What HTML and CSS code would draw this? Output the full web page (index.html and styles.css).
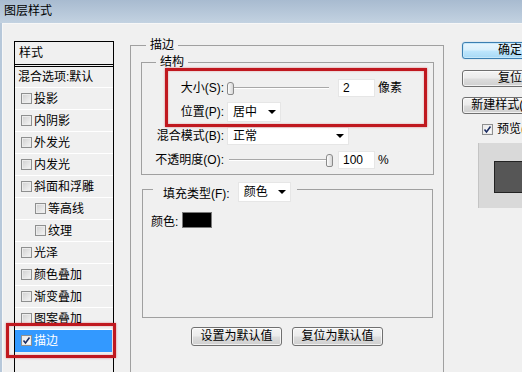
FILE: index.html
```html
<!DOCTYPE html>
<html lang="zh-CN">
<head>
<meta charset="utf-8">
<title>图层样式</title>
<link rel="stylesheet" href="styles.css">
</head>
<body>
<div class="titlebar">图层样式</div>
<div class="client">
  <div class="styles-list">
    <div class="list-header">样式</div>
    <div class="list-row blend">混合选项:默认</div>
    <div class="list-row"><span class="cb"></span>投影</div>
    <div class="list-row"><span class="cb"></span>内阴影</div>
    <div class="list-row"><span class="cb"></span>外发光</div>
    <div class="list-row"><span class="cb"></span>内发光</div>
    <div class="list-row"><span class="cb"></span>斜面和浮雕</div>
    <div class="list-row sub"><span class="cb"></span>等高线</div>
    <div class="list-row sub"><span class="cb"></span>纹理</div>
    <div class="list-row"><span class="cb"></span>光泽</div>
    <div class="list-row"><span class="cb"></span>颜色叠加</div>
    <div class="list-row"><span class="cb"></span>渐变叠加</div>
    <div class="list-row"><span class="cb"></span>图案叠加</div>
    <div class="list-row selected"><span class="cb checked"><svg viewBox="0 0 9 9" width="9" height="9"><path d="M1.5 4.5 L3.5 7 L7.5 1.5" fill="none" stroke="#1b2d63" stroke-width="1.6"/></svg></span>描边</div>
  </div>

  <fieldset class="group stroke">
    <legend>描边</legend>
    <fieldset class="group structure">
      <legend>结构</legend>
      <div class="row">
        <span class="lbl">大小(S):</span>
        <div class="slider"><span class="thumb"></span></div>
        <div class="num">2</div>
        <span class="unit">像素</span>
      </div>
      <div class="row">
        <span class="lbl">位置(P):</span>
        <div class="select pos"><span>居中</span><span class="arrow"></span></div>
      </div>
      <div class="row">
        <span class="lbl">混合模式(B):</span>
        <div class="select mode"><span>正常</span><span class="arrow"></span></div>
      </div>
      <div class="row">
        <span class="lbl">不透明度(O):</span>
        <div class="slider end"><span class="thumb"></span></div>
        <div class="num">100</div>
        <span class="unit">%</span>
      </div>
    </fieldset>
    <fieldset class="group fill">
      <legend><span class="legend-text">填充类型(F):</span><span class="select filltype"><span>颜色</span><span class="arrow"></span></span></legend>
      <div class="color-row"><span>颜色:</span><span class="swatch"></span></div>
    </fieldset>
    <div class="defaults">
      <button class="btn wide">设置为默认值</button>
      <button class="btn wide">复位为默认值</button>
    </div>
  </fieldset>

  <div class="side">
    <button class="btn side-btn default">确定</button>
    <button class="btn side-btn gap1">复位</button>
    <button class="btn side-btn gap2">新建样式(W)...</button>
    <div class="preview-check"><span class="cb checked"><svg viewBox="0 0 9 9" width="9" height="9"><path d="M1.5 4.5 L3.5 7 L7.5 1.5" fill="none" stroke="#1b2d63" stroke-width="1.6"/></svg></span>预览(V)</div>
    <div class="preview-box"><div class="preview-swatch"></div></div>
  </div>
</div>
<div class="mark mark-size"></div>
<div class="mark mark-stroke"></div>
</body>
</html>
```

FILE: styles.css
```css
html, body {
  margin: 0;
  padding: 0;
}

body {
  width: 522px;
  height: 372px;
  overflow: hidden;
  position: relative;
  background: #b7c8da;
  font-family: "Liberation Sans", "Noto Sans CJK SC", sans-serif;
  font-size: 12px;
  line-height: 14px;
  color: #000;
}

.titlebar {
  height: 23px;
  line-height: 23px;
  padding-left: 4px;
  background: linear-gradient(#a8bbd0, #c3d2e1);
  font-size: 12px;
}

.client {
  margin-left: 2px;
  border-left: 1px solid #f7f7f7;
  border-top: 1px solid #f7f7f7;
  background: #f0f0f0;
  height: 348px;
  display: flex;
  align-items: flex-start;
  overflow: hidden;
}

/* ---------- styles list ---------- */
.styles-list {
  flex: none;
  margin: 17px 0 0 11px;
  width: 100px;
  height: 340px;
  box-sizing: border-box;
  border: 1px solid #000;
  border-bottom: none;
}

.list-header {
  height: 22px;
  line-height: 22px;
  padding-left: 4px;
  border-bottom: 3px double #000;
}

.list-row {
  height: 22px;
  box-sizing: border-box;
  border-bottom: 1px solid #fff;
  display: flex;
  align-items: center;
  padding-left: 6px;
  white-space: nowrap;
}

.list-row.blend {
  height: 21px;
  padding-left: 3px;
}

.list-row.sub {
  padding-left: 20px;
}

.list-row.selected {
  background: #3399ff;
  color: #fff;
  margin-right: 1px;
  border-bottom-color: #3399ff;
}

.cb {
  flex: none;
  width: 11px;
  height: 11px;
  box-sizing: border-box;
  border: 1px solid #8e8f8f;
  background: linear-gradient(135deg, #cfcfcf, #f6f6f6);
  box-shadow: inset 0 0 0 1px #ececec;
  margin-right: 2px;
  display: flex;
  align-items: center;
  justify-content: center;
}

.cb.checked {
  background: linear-gradient(135deg, #e8e8e8, #ffffff);
}

.cb svg {
  display: block;
}

/* ---------- group boxes ---------- */
.group {
  border: 1px solid #a0a0a0;
  padding: 0;
  margin: 0;
  box-sizing: border-box;
  min-width: 0;
}

.group > legend {
  line-height: 14px;
  padding: 0 4px;
}

.stroke {
  flex: none;
  margin: 14px 0 0 16px;
  width: 314px;
  height: 360px;
}

.stroke > legend {
  margin-left: 15px;
}

.structure {
  margin: 3px 8px 0 10px;
  width: 293px;
  padding: 9px 0 4px 0;
}

.structure > legend {
  margin-left: 14px;
}

.row {
  display: flex;
  align-items: center;
  height: 20px;
  white-space: nowrap;
}

.row + .row {
  margin-top: 4px;
}

.lbl {
  flex: none;
  width: 82px;
  text-align: right;
}

.slider {
  flex: none;
  width: 106px;
  height: 20px;
  margin: 0 5px 0 3px;
  display: flex;
  align-items: center;
  background:
    linear-gradient(to bottom,
      transparent 9px, #a8a8a8 9px, #a8a8a8 10px,
      #ffffff 10px, #ffffff 11px, transparent 11px)
    no-repeat 2px 0 / 100px 20px;
}

.slider.end {
  justify-content: flex-end;
}

.thumb {
  width: 7px;
  height: 13px;
  box-sizing: border-box;
  border: 1px solid #8a8a8a;
  border-radius: 3px 3px 2px 2px;
  background: linear-gradient(to right, #fdfdfd, #d6d6d6);
}

.num {
  flex: none;
  width: 37px;
  height: 18px;
  box-sizing: border-box;
  background: #fff;
  border: 1px solid #e6e6e6;
  padding-left: 4px;
  line-height: 16px;
}

.unit {
  margin-left: 3px;
}

.select {
  flex: none;
  margin-left: 3px;
  height: 20px;
  box-sizing: border-box;
  background: #fff;
  border: 1px solid #e6e6e6;
  display: flex;
  align-items: center;
  justify-content: space-between;
  padding: 0 4px 0 5px;
}

.select.pos {
  width: 54px;
}

.select.mode {
  width: 122px;
  height: 18px;
}

.arrow {
  width: 0;
  height: 0;
  border-left: 4px solid transparent;
  border-right: 4px solid transparent;
  border-top: 4px solid #000;
}

.fill {
  margin: 7px 10px 0 11px;
  width: 291px;
  height: 136px;
}

.fill > legend {
  margin-left: 10px;
  padding: 0 6px 0 10px;
  height: 14px;
  display: flex;
  align-items: flex-start;
  white-space: nowrap;
}

.legend-text {
  margin-top: 5px;
}

.select.filltype {
  width: 53px;
  margin-left: 8px;
}

.color-row {
  margin: 16px 0 0 8px;
  height: 16px;
  display: flex;
  align-items: center;
}

.color-row span:first-child {
  margin-top: 3px;
}

.swatch {
  width: 30px;
  height: 16px;
  box-sizing: border-box;
  margin-left: 4px;
  background: #000;
  border: 1px solid #7a7a7a;
}

.defaults {
  margin: 9px 0 0 60px;
  display: flex;
  gap: 10px;
}

/* ---------- buttons ---------- */
.btn {
  font: inherit;
  color: #000;
  padding: 0;
  margin: 0;
  box-sizing: border-box;
  border: 1px solid #707070;
  border-radius: 3px;
  background: linear-gradient(#f4f4f4 0%, #ebebeb 48%, #dddddd 52%, #cfcfcf 100%);
  box-shadow: inset 0 0 0 1px rgba(255, 255, 255, 0.7);
  text-align: center;
  white-space: nowrap;
}

.btn.wide {
  width: 91px;
  height: 19px;
  line-height: 17px;
}

.side {
  flex: none;
  width: 100px;
  margin: 18px 0 0 18px;
}

.side-btn {
  display: block;
  width: 96px;
  height: 17px;
  line-height: 15px;
}

.side-btn.default {
  border-color: #3c7fb1;
  background: linear-gradient(#eaf6fd 0%, #d9f0fc 48%, #bee6fd 52%, #a7d9f5 100%);
  box-shadow: inset 0 0 0 1px #c6e8fa, 0 0 1px #5da8dd;
}

.side-btn.gap1 {
  margin-top: 11px;
}

.side-btn.gap2 {
  margin-top: 10px;
}

.preview-check {
  margin: 9px 0 0 20px;
  height: 12px;
  display: flex;
  align-items: center;
  white-space: nowrap;
}

.preview-check .cb {
  margin-right: 4px;
}

.preview-box {
  margin: 8px 0 0 16px;
  width: 100px;
  height: 65px;
  background: #d9d9d9;
  border-left: 1px solid #c4c4c4;
  box-sizing: border-box;
  padding: 18px 0 0 15px;
}

.preview-swatch {
  width: 60px;
  height: 32px;
  box-sizing: border-box;
  background: #565656;
  border: 1px solid #222;
}

/* ---------- red annotation frames ---------- */
.mark {
  position: absolute;
  box-sizing: border-box;
  border: 3px solid #c0181f;
  box-shadow: 0 0 2px rgba(200, 20, 30, 0.5), inset 0 0 2px rgba(200, 20, 30, 0.4);
}

.mark-size {
  left: 165px;
  top: 68px;
  width: 262px;
  height: 59px;
}

.mark-stroke {
  left: 6px;
  top: 323px;
  width: 110px;
  height: 35px;
}
```
